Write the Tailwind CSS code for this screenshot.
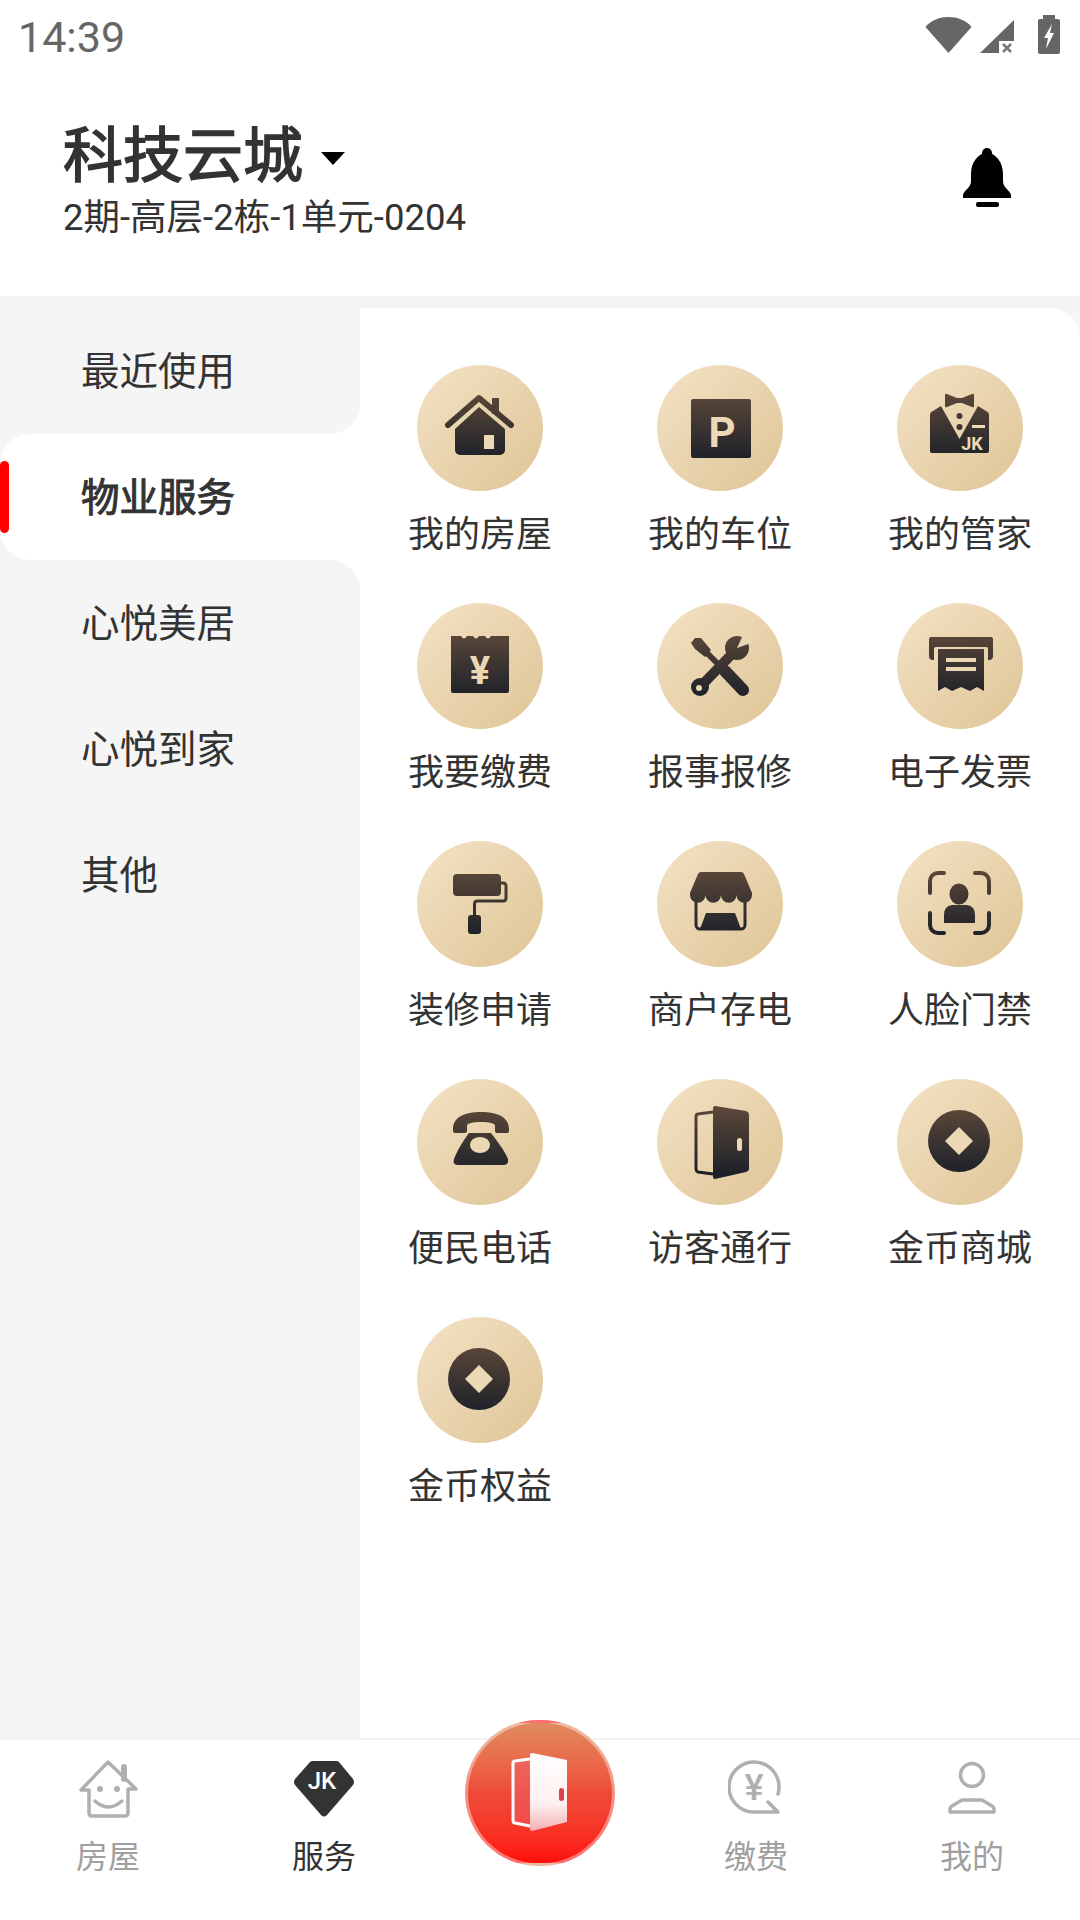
<!DOCTYPE html>
<html lang="zh">
<head>
    <meta charset="UTF-8">
    <meta name="viewport" content="width=device-width, initial-scale=1.0">
    <title>服务</title>
    <script src="https://cdn.jsdelivr.net/npm/@tailwindcss/browser@4"></script>
</head>
<body class="bg-white font-['Roboto','Noto_Sans_CJK_SC',sans-serif] text-[#333]">
    <!-- shared icon gradient -->
    <svg class="absolute w-0 h-0">
        <defs>
            <linearGradient id="g" gradientUnits="userSpaceOnUse" x1="0" y1="30" x2="0" y2="95">
                <stop offset="0" stop-color="#5a4739"/>
                <stop offset="1" stop-color="#1d2129"/>
            </linearGradient>
            <linearGradient id="doorFill" x1="0" y1="0" x2="0" y2="1">
                <stop offset="0" stop-color="#ffffff"/>
                <stop offset="0.65" stop-color="#fff0f0"/>
                <stop offset="1" stop-color="#f4aeb4"/>
            </linearGradient>
        </defs>
    </svg>

    <div class="flex flex-col w-[1080px] h-[1920px] overflow-hidden">
        <!-- status bar -->
        <div class="h-[72px] flex items-start justify-between shrink-0">
            <span class="ml-[18px] mt-[12px] text-[43px] leading-[50px] text-[#666]">14:39</span>
            <div class="flex items-start mr-[20px]">
                <svg class="mt-[17px] w-[47px] h-[36px]" viewBox="0 0 47 36"><path fill="#666" d="M0.5 10C6 3 15 0 23.5 0C32 0 41 3 46.5 10L23.5 36Z"/></svg>
                <svg class="mt-[20px] ml-[8px] w-[34px] h-[33px]" viewBox="0 0 34 33"><path fill="#666" d="M34 0V33H0Z"/><rect x="19" y="21" width="15" height="12" fill="#fff"/><path d="M23 24l8 8M31 24l-8 8" stroke="#777" stroke-width="2.5"/></svg>
                <svg class="mt-[15px] ml-[24px] w-[22px] h-[39px]" viewBox="0 0 22 39"><rect x="5" width="12" height="6" fill="#666"/><rect y="4" width="22" height="35" rx="2" fill="#666"/><path fill="#fff" d="M14 9L6 23H10L8 34L16 18H12L14 9Z"/></svg>
            </div>
        </div>

        <!-- header -->
        <div class="h-[224px] shrink-0 flex justify-between pl-[63px] pr-[69px]">
            <div class="pt-[50px]">
                <div class="flex items-center h-[70px]">
                    <span class="text-[60px] leading-[70px] [-webkit-text-stroke:1.5px_#333]">科技云城</span>
                    <span class="ml-[18px] mt-[2px] w-0 h-0 border-x-[12.5px] border-x-transparent border-t-[13px] border-t-black"></span>
                </div>
                <div class="text-[36.5px] leading-[44px] mt-[4px]">2期-高层-2栋-1单元-0204</div>
            </div>
            <svg class="mt-[76px] w-[48px] h-[59px]" viewBox="0 0 48 59">
                <circle cx="24" cy="5" r="5"/>
                <path d="M24 4C15 6 8 14 8 26V33C8 40 1 42 0 47V50H48V47C47 42 40 40 40 33V26C40 14 33 6 24 4Z"/>
                <rect x="13" y="54" width="23" height="5" rx="2"/>
            </svg>
        </div>

        <!-- main -->
        <div class="flex-1 bg-[#f5f5f5] pt-[12px] flex min-h-0">
            <!-- sidebar -->
            <div class="w-[360px] shrink-0 flex flex-col bg-white">
                <div class="h-[126px] bg-white">
                    <div class="h-full bg-[#f5f5f5] rounded-br-[30px] flex items-center pl-[81px] pt-[2px] text-[38.5px]">最近使用</div>
                </div>
                <div class="h-[126px] bg-[#f5f5f5]">
                    <div class="relative h-full bg-white rounded-l-[30px] flex items-center pl-[81px] pt-[2px] text-[38.5px] [-webkit-text-stroke:1px_#333]">
                        <span class="absolute left-0 top-[27px] w-[9px] h-[72px] rounded-full bg-[#ff0000]"></span>
                        物业服务
                    </div>
                </div>
                <div class="flex-1 bg-[#f5f5f5] rounded-tr-[30px] flex flex-col text-[38.5px]">
                    <div class="h-[126px] flex items-center pl-[81px] pt-[2px]">心悦美居</div>
                    <div class="h-[126px] flex items-center pl-[81px] pt-[2px]">心悦到家</div>
                    <div class="h-[126px] flex items-center pl-[81px] pt-[2px]">其他</div>
                </div>
            </div>

            <!-- service grid -->
            <div class="flex-1 bg-white rounded-tr-[30px] pt-[57px]">
                <div class="grid grid-cols-3 auto-rows-[238px] text-[36px] leading-[44px]">
                    <div class="flex flex-col items-center">
                        <div class="w-[126px] h-[126px] rounded-full bg-linear-to-br from-[#f3e2c5] to-[#dfc596]">
                            <svg class="w-full h-full" viewBox="0 0 126 126">
                                <rect x="75" y="33" width="7" height="16" fill="url(#g)"/>
                                <path d="M31 60L62 33L94 60" fill="none" stroke="url(#g)" stroke-width="6" stroke-linecap="round" stroke-linejoin="round"/>
                                <path fill="url(#g)" d="M62 42L88 64V85a5 5 0 0 1-5 5H43a5 5 0 0 1-5-5V64Z"/>
                                <rect x="67" y="70" width="10" height="14" fill="#ecd8b5"/>
                            </svg>
                        </div>
                        <span class="mt-[22px]">我的房屋</span>
                    </div>
                    <div class="flex flex-col items-center">
                        <div class="w-[126px] h-[126px] rounded-full bg-linear-to-br from-[#f3e2c5] to-[#dfc596]">
                            <svg class="w-full h-full" viewBox="0 0 126 126">
                                <rect x="34" y="34" width="60" height="59" rx="2" fill="url(#g)"/>
                                <text x="65" y="82" text-anchor="middle" font-size="42" font-weight="700" fill="#ecd8b5">P</text>
                            </svg>
                        </div>
                        <span class="mt-[22px]">我的车位</span>
                    </div>
                    <div class="flex flex-col items-center">
                        <div class="w-[126px] h-[126px] rounded-full bg-linear-to-br from-[#f3e2c5] to-[#dfc596]">
                            <svg class="w-full h-full" viewBox="0 0 126 126">
                                <path fill="url(#g)" d="M48 30Q48 28 50 29L60 33H65L75 29Q77 28 77 30V41Q77 43 75 42L65 38H60L50 42Q48 43 48 41Z"/>
                                <path fill="url(#g)" d="M33 50Q33 47 36 46L44 41L62.5 74L81 41L89 46Q92 47 92 50V86Q92 88 90 88H35Q33 88 33 86Z"/>
                                <circle cx="62.5" cy="51" r="3" fill="url(#g)"/>
                                <circle cx="62.5" cy="62" r="3" fill="url(#g)"/>
                                <rect x="75" y="60" width="13" height="3" fill="#ecd8b5"/>
                                <text x="75" y="85" text-anchor="middle" font-size="18" font-weight="700" fill="#ecd8b5">JK</text>
                            </svg>
                        </div>
                        <span class="mt-[22px]">我的管家</span>
                    </div>

                    <div class="flex flex-col items-center">
                        <div class="w-[126px] h-[126px] rounded-full bg-linear-to-br from-[#f3e2c5] to-[#dfc596]">
                            <svg class="w-full h-full" viewBox="0 0 126 126">
                                <path fill="url(#g)" d="M34 33H44Q47 38 50 33H56Q59 38 62 33H68Q71 38 74 33H92V88Q92 90 90 90H36Q34 90 34 88Z"/>
                                <text x="63" y="81" text-anchor="middle" font-size="38" font-weight="700" fill="#ecd8b5">¥</text>
                            </svg>
                        </div>
                        <span class="mt-[22px]">我要缴费</span>
                    </div>
                    <div class="flex flex-col items-center">
                        <div class="w-[126px] h-[126px] rounded-full bg-linear-to-br from-[#f3e2c5] to-[#dfc596]">
                            <svg class="w-full h-full" viewBox="0 0 126 126">
                                <path fill="url(#g)" d="M38 35L44 35L54 47L48 54L38 46L34 40Z"/>
                                <path d="M48 48L68 68" stroke="url(#g)" stroke-width="6"/>
                                <path d="M68 68L86 87" stroke="url(#g)" stroke-width="12" stroke-linecap="round"/>
                                <path d="M76 50L44 83" stroke="url(#g)" stroke-width="10"/>
                                <circle cx="43" cy="84" r="9" fill="url(#g)"/>
                                <circle cx="42" cy="85" r="3" fill="#e9d5b0"/>
                                <circle cx="80" cy="45" r="12" fill="url(#g)"/>
                                <path fill="#e9d6b2" d="M80 45L87 30L97 39Z"/>
                            </svg>
                        </div>
                        <span class="mt-[22px]">报事报修</span>
                    </div>
                    <div class="flex flex-col items-center">
                        <div class="w-[126px] h-[126px] rounded-full bg-linear-to-br from-[#f3e2c5] to-[#dfc596]">
                            <svg class="w-full h-full" viewBox="0 0 126 126">
                                <path fill="url(#g)" d="M32 36Q32 34 34 34H94Q96 34 96 36V53Q96 57 92 57H91V46Q91 44 89 44H39Q37 44 37 46V57H36Q32 57 32 53Z"/>
                                <path fill="url(#g)" d="M41 46H87V88L80 84L73 88L64 84L55 88L48 84L41 88Z"/>
                                <rect x="49" y="55" width="30" height="4" fill="#ecd8b5"/>
                                <rect x="49" y="64" width="30" height="4" fill="#ecd8b5"/>
                            </svg>
                        </div>
                        <span class="mt-[22px]">电子发票</span>
                    </div>

                    <div class="flex flex-col items-center">
                        <div class="w-[126px] h-[126px] rounded-full bg-linear-to-br from-[#f3e2c5] to-[#dfc596]">
                            <svg class="w-full h-full" viewBox="0 0 126 126">
                                <rect x="36" y="33" width="48" height="22" rx="4" fill="url(#g)"/>
                                <path d="M84 42H86Q89 42 89 45V57Q89 60 86 60H60Q57.500 60 57.500 63V75" fill="none" stroke="url(#g)" stroke-width="3"/>
                                <rect x="51" y="74" width="13" height="19" rx="3" fill="url(#g)"/>
                            </svg>
                        </div>
                        <span class="mt-[22px]">装修申请</span>
                    </div>
                    <div class="flex flex-col items-center">
                        <div class="w-[126px] h-[126px] rounded-full bg-linear-to-br from-[#f3e2c5] to-[#dfc596]">
                            <svg class="w-full h-full" viewBox="0 0 126 126">
                                <path fill="url(#g)" d="M44 31H84Q86 31 87 33L95 52V54A7.750 7.750 0 0 1 79.500 54A7.750 7.750 0 0 1 64 54A7.750 7.750 0 0 1 48.500 54A7.750 7.750 0 0 1 33 54V52L41 33Q42 31 44 31Z"/>
                                <path d="M39 60V84a4 4 0 0 0 4 4H84a4 4 0 0 0 4-4V60" fill="none" stroke="url(#g)" stroke-width="3"/>
                                <path fill="url(#g)" d="M49 72H78L84 88H43Z"/>
                            </svg>
                        </div>
                        <span class="mt-[22px]">商户存电</span>
                    </div>
                    <div class="flex flex-col items-center">
                        <div class="w-[126px] h-[126px] rounded-full bg-linear-to-br from-[#f3e2c5] to-[#dfc596]">
                            <svg class="w-full h-full" viewBox="0 0 126 126">
                                <path d="M33 52V40a8 8 0 0 1 8-8H47M78 32H84a8 8 0 0 1 8 8V52M33 72V84a8 8 0 0 0 8 8H47M78 92H84a8 8 0 0 0 8-8V72" fill="none" stroke="url(#g)" stroke-width="4" stroke-linecap="round"/>
                                <ellipse cx="62" cy="53" rx="9.500" ry="10.500" fill="url(#g)"/>
                                <path fill="url(#g)" d="M47 82V74Q47 65 55 64H70Q78 65 78 74V82Z"/>
                            </svg>
                        </div>
                        <span class="mt-[22px]">人脸门禁</span>
                    </div>

                    <div class="flex flex-col items-center">
                        <div class="w-[126px] h-[126px] rounded-full bg-linear-to-br from-[#f3e2c5] to-[#dfc596]">
                            <svg class="w-full h-full" viewBox="0 0 126 126">
                                <path fill="url(#g)" d="M36 50C36 38 48 33 64 33C80 33 92 38 92 50V52Q92 54 90 54H80Q78 54 78 52V47C78 44 72 43 64 43C56 43 50 44 50 47V52Q50 54 48 54H38Q36 54 36 52Z"/>
                                <path fill="url(#g)" d="M52 54H74C80 62 88 72 91 80Q92 86 86 86H42Q35 86 37 80C40 72 46 62 52 54Z"/>
                                <ellipse cx="63" cy="66" rx="10" ry="8" fill="#ecd8b5"/>
                            </svg>
                        </div>
                        <span class="mt-[22px]">便民电话</span>
                    </div>
                    <div class="flex flex-col items-center">
                        <div class="w-[126px] h-[126px] rounded-full bg-linear-to-br from-[#f3e2c5] to-[#dfc596]">
                            <svg class="w-full h-full" viewBox="0 0 126 126">
                                <path d="M56 33L41 35Q39 35 39 38V90Q39 92 41 93L56 95" fill="none" stroke="url(#g)" stroke-width="3"/>
                                <path fill="url(#g)" d="M56 29Q56 27 58 27L89 32Q92 33 92 36V90Q92 92 89 93L58 100Q56 100 56 98Z"/>
                                <rect x="80" y="59" width="5" height="13" rx="2.500" fill="#ecd8b5"/>
                            </svg>
                        </div>
                        <span class="mt-[22px]">访客通行</span>
                    </div>
                    <div class="flex flex-col items-center">
                        <div class="w-[126px] h-[126px] rounded-full bg-linear-to-br from-[#f3e2c5] to-[#dfc596]">
                            <svg class="w-full h-full" viewBox="0 0 126 126">
                                <circle cx="62" cy="62" r="31" fill="url(#g)"/>
                                <path fill="#ecd8b5" d="M62 48L76 62L62 76L48 62Z"/>
                            </svg>
                        </div>
                        <span class="mt-[22px]">金币商城</span>
                    </div>

                    <div class="flex flex-col items-center">
                        <div class="w-[126px] h-[126px] rounded-full bg-linear-to-br from-[#f3e2c5] to-[#dfc596]">
                            <svg class="w-full h-full" viewBox="0 0 126 126">
                                <circle cx="62" cy="62" r="31" fill="url(#g)"/>
                                <path fill="#ecd8b5" d="M62 48L76 62L62 76L48 62Z"/>
                            </svg>
                        </div>
                        <span class="mt-[22px]">金币权益</span>
                    </div>
                </div>
            </div>
        </div>

        <!-- bottom nav -->
        <div class="relative h-[182px] shrink-0 bg-white border-t-2 border-[#f2f2f2] grid grid-cols-5 text-[32px] leading-[40px] text-[#a0a0a0]">
            <div class="flex flex-col items-center pt-[20px]">
                <svg class="w-[60px] h-[58px]" viewBox="0 0 60 58" fill="none" stroke="#b0b0b0" stroke-width="3.500" stroke-linecap="round" stroke-linejoin="round">
                    <path d="M11 30H3L30 2L58 29H50V53Q50 56 47 56H14Q11 56 11 53Z"/>
                    <path d="M46 19V7" stroke-width="6"/>
                    <path d="M17 41Q30 53 44 41"/>
                    <circle cx="22" cy="29" r="3" fill="#b0b0b0" stroke="none"/>
                    <circle cx="39" cy="29" r="3" fill="#b0b0b0" stroke="none"/>
                </svg>
                <span class="mt-[19px]">房屋</span>
            </div>
            <div class="flex flex-col items-center pt-[20px] text-[#333]">
                <svg class="w-[62px] h-[58px]" viewBox="0 0 62 58">
                    <path fill="#333" d="M17 2Q18 1 20 1H43Q45 1 46 2L60 19Q62 22 60 25L34 55Q31 58 28 55L2 25Q0 22 2 19Z"/>
                    <text x="29" y="29" text-anchor="middle" font-size="24" font-weight="500" fill="#fff">JK</text>
                </svg>
                <span class="mt-[19px]">服务</span>
            </div>
            <div></div>
            <div class="flex flex-col items-center pt-[20px]">
                <svg class="w-[56px] h-[58px]" viewBox="0 0 56 58" fill="none" stroke="#b0b0b0" stroke-width="3.500" stroke-linecap="round" stroke-linejoin="round">
                    <path d="M50 34A25 25 0 1 0 26 52H50L40 42"/>
                    <text x="26" y="40" text-anchor="middle" font-size="36" font-weight="500" fill="#b0b0b0" stroke="none">¥</text>
                </svg>
                <span class="mt-[19px]">缴费</span>
            </div>
            <div class="flex flex-col items-center pt-[20px]">
                <svg class="w-[48px] h-[58px]" viewBox="0 0 48 58" fill="none" stroke="#b0b0b0" stroke-width="3.500" stroke-linejoin="round">
                    <circle cx="24" cy="15" r="11.500"/>
                    <path d="M2 52V49Q2 47 4 46L14 40H34L44 46Q46 47 46 49V52Z"/>
                </svg>
                <span class="mt-[19px]">我的</span>
            </div>

            <!-- center door button -->
            <div class="absolute left-[465px] top-[-20px] w-[150px] h-[146px] rounded-full border-[3px] border-white/40 bg-linear-to-b from-[#e08a5f] via-[#ee4a38] to-[#ff0a0a] flex items-center justify-center">
                <svg class="w-[60px] h-[80px] ml-[1px] mt-[-3px]" viewBox="0 0 60 80">
                    <path d="M19 7L4 9Q2 9 2 11V68Q2 71 4 71L19 74" fill="#f0606c" fill-opacity="0.5" stroke="#fff" stroke-width="3"/>
                    <path fill="url(#doorFill)" d="M19 3Q19 1 21 1L56 8V70L21 79Q19 79 19 77Z"/>
                    <rect x="48" y="36" width="5" height="13" rx="2.500" fill="#e04050"/>
                </svg>
            </div>
        </div>
    </div>
</body>
</html>
